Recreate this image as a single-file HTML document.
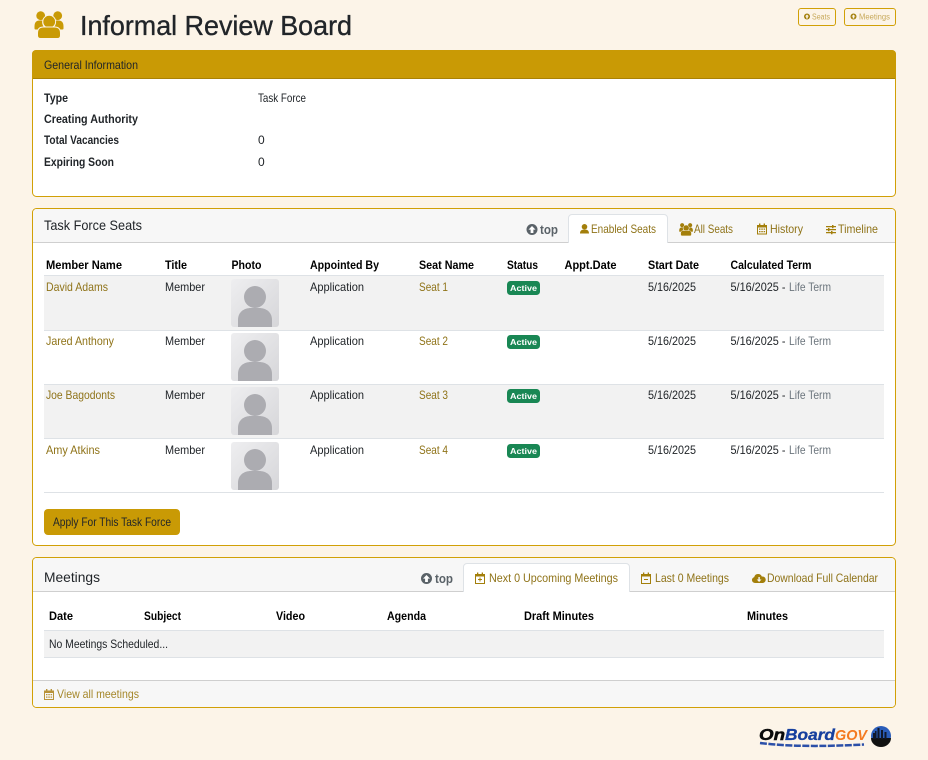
<!DOCTYPE html>
<html lang="en"><head><meta charset="utf-8"><title>Informal Review Board</title>
<style>
html,body{margin:0;padding:0;background:#fcf4e8;width:928px;height:760px;overflow:hidden}
svg{display:block}
text{font-family:"Liberation Sans",sans-serif;font-size:12px;fill:#212529}
.b{font-weight:700;fill:#000}
.l{fill:#8f7318}
.t{fill:#8f7318}
.g{fill:#6c757d}
.k{fill:#212529;font-weight:700}
.i{fill:#a37f0b}
</style></head><body>
<svg xmlns="http://www.w3.org/2000/svg" width="928" height="760" viewBox="0 0 928 760">
<defs>
<linearGradient id="ph" x1="0" y1="0" x2="1" y2="1"><stop offset="0" stop-color="#eeeef0"/><stop offset="1" stop-color="#d6d6d9"/></linearGradient>
<g id="photo"><rect width="48" height="48" rx="3" fill="url(#ph)"/><circle cx="24" cy="18" r="11" fill="#acacb1"/><path d="M7 48v-7c0-8 6-12 13-12h8c7 0 13 4 13 12v7z" fill="#acacb1"/></g>
<g id="users">
<circle cx="6.700" cy="4.700" r="4.400"/><circle cx="23.700" cy="4.700" r="4.400"/>
<path d="M.5 15.500q0-6 5-6h3q-1 3 1 6-3 1-4 3h-4q-1 0-1-1zM29.500 15.500q0-6-5-6h-3q1 3-1 6 3 1 4 3h4q1 0 1-1z"/>
<circle cx="15.200" cy="10.700" r="6.400" stroke="#fcf4e8" stroke-width="1"/>
<path d="M6.500 27.500q-3 0-3-3v-2.500q0-6 6-6h11q6 0 6 6v2.500q0 3-3 3z" stroke="#fcf4e8" stroke-width="1"/>
</g>
<g id="cal"><path d="M1 2.500h2V1h1.400v1.500h3.200V1H9v1.500h2v9.500H1zM2 5v6h8V5z"/><path d="M3 6h1.500v1.300H3zM5.300 6h1.500v1.300H5.300zM7.600 6h1.500v1.300H7.600zM3 8.500h1.500v1.300H3zM5.300 8.500h1.500v1.300H5.300zM7.600 8.500h1.500v1.300H7.600z"/></g>
<g id="up"><circle cx="5.500" cy="5.500" r="5.500" fill="#5a6268"/><path d="M5.500 2 9 5.600H6.900V9H4.100V5.600H2z" fill="#fff"/></g>
<g id="pl"><circle cx="3.500" cy="3.500" r="3" fill="#a37f0b"/><path d="M3.500 1.500 5.500 3.500H4.300v2H2.700v-2H1.500z" fill="#fcf4e8"/></g>
</defs>

<!-- page header -->
<use href="#users" transform="translate(34 11)" fill="#c99a05"/>
<text x="80" y="35" style="font-size:28px;stroke:#212529;stroke-width:.35px" textLength="272" lengthAdjust="spacingAndGlyphs">Informal Review Board</text>
<rect x="798.500" y="8.500" width="37" height="17" rx="2.500" fill="none" stroke="#d1a006"/>
<use href="#pl" x="803.500" y="13"/>
<text x="812" y="19.500" style="font-size:8px;fill:#c8aa5c" textLength="18" lengthAdjust="spacingAndGlyphs">Seats</text>
<rect x="844.500" y="8.500" width="51" height="17" rx="2.500" fill="none" stroke="#d1a006"/>
<use href="#pl" x="850" y="13"/>
<text x="859" y="19.500" style="font-size:8px;fill:#c8aa5c" textLength="31" lengthAdjust="spacingAndGlyphs">Meetings</text>

<!-- General information -->
<rect x="32.500" y="50.500" width="863" height="146" rx="4" fill="#fff" stroke="#d1a006"/>
<path d="M32 54a4 4 0 0 1 4-4h856a4 4 0 0 1 4 4v25H32z" fill="#c99a05"/>
<rect x="33" y="78" width="862" height="1" fill="#a98205"/>
<text x="44" y="69" textLength="94" lengthAdjust="spacingAndGlyphs">General Information</text>
<text class="k" x="44" y="102" textLength="24" lengthAdjust="spacingAndGlyphs">Type</text>
<text class="k" x="44" y="123" textLength="94" lengthAdjust="spacingAndGlyphs">Creating Authority</text>
<text class="k" x="44" y="144" textLength="75" lengthAdjust="spacingAndGlyphs">Total Vacancies</text>
<text class="k" x="44" y="166" textLength="70" lengthAdjust="spacingAndGlyphs">Expiring Soon</text>
<text x="258" y="102" textLength="48" lengthAdjust="spacingAndGlyphs">Task Force</text>
<text x="258" y="144">0</text>
<text x="258" y="166">0</text>

<!-- Seats panel -->
<rect x="32.500" y="208.500" width="863" height="337" rx="4" fill="#fff" stroke="#d1a006"/>
<path d="M33 212.500a3.500 3.500 0 0 1 3.500-3.500h855a3.500 3.500 0 0 1 3.500 3.500V242.500H33z" fill="#f7f7f7"/>
<rect x="33" y="242" width="862" height="1" fill="#cfcfcf"/>
<path d="M568.500 243V218a3.500 3.500 0 0 1 3.500-3.500h92a3.500 3.500 0 0 1 3.500 3.500v25" fill="#fff" stroke="#dee2e6"/>
<rect x="569" y="241" width="98" height="3" fill="#fff"/>
<text x="44" y="230" style="font-size:14px" textLength="98" lengthAdjust="spacingAndGlyphs">Task Force Seats</text>
<use href="#up" x="526.500" y="224"/>
<text x="540" y="234" style="font-size:12.500px;font-weight:700;fill:#5a6268" textLength="18" lengthAdjust="spacingAndGlyphs">top</text>
<path d="M584.500 224a2.800 2.800 0 1 1 0 5.600 2.800 2.800 0 0 1 0-5.600zM580 233.500c0-2.700 1.500-3.800 3-3.800h3c1.500 0 3 1.100 3 3.800z" class="i"/>
<text class="t" x="591" y="233" textLength="65" lengthAdjust="spacingAndGlyphs">Enabled Seats</text>
<use href="#users" transform="translate(679 223) scale(.47)" fill="#a37f0b"/>
<text class="t" x="694" y="233" textLength="39" lengthAdjust="spacingAndGlyphs">All Seats</text>
<use href="#cal" transform="translate(756 222.500)" class="i"/>
<text class="t" x="770" y="233" textLength="33" lengthAdjust="spacingAndGlyphs">History</text>
<path d="M826 226h10v1.200h-10zM826 229h10v1.200h-10zM826 232h10v1.200h-10z" class="i"/><path d="M832 225h1.500v3.200H832zM828 228h1.500v3.200H828zM831 231h1.500v3.200H831z" class="i"/>
<text class="t" x="838" y="233" textLength="40" lengthAdjust="spacingAndGlyphs">Timeline</text>

<text class="b" x="46" y="269" textLength="76" lengthAdjust="spacingAndGlyphs">Member Name</text>
<text class="b" x="165" y="269" textLength="22" lengthAdjust="spacingAndGlyphs">Title</text>
<text class="b" x="231.500" y="269" textLength="30" lengthAdjust="spacingAndGlyphs">Photo</text>
<text class="b" x="310" y="269" textLength="69" lengthAdjust="spacingAndGlyphs">Appointed By</text>
<text class="b" x="419" y="269" textLength="55" lengthAdjust="spacingAndGlyphs">Seat Name</text>
<text class="b" x="507" y="269" textLength="31" lengthAdjust="spacingAndGlyphs">Status</text>
<text class="b" x="564.500" y="269" textLength="52" lengthAdjust="spacingAndGlyphs">Appt.Date</text>
<text class="b" x="648" y="269" textLength="51" lengthAdjust="spacingAndGlyphs">Start Date</text>
<text class="b" x="730.500" y="269" textLength="81" lengthAdjust="spacingAndGlyphs">Calculated Term</text>

<rect x="44" y="275" width="840" height="1" fill="#dee2e6"/>
<rect x="44" y="276" width="840" height="54" fill="#f2f2f2"/>
<rect x="44" y="330" width="840" height="1" fill="#dee2e6"/>
<rect x="44" y="384" width="840" height="1" fill="#dee2e6"/>
<rect x="44" y="385" width="840" height="53" fill="#f2f2f2"/>
<rect x="44" y="438" width="840" height="1" fill="#dee2e6"/>
<rect x="44" y="492" width="840" height="1" fill="#dee2e6"/>

<!-- rows -->
<text class="l" x="46" y="291" textLength="62" lengthAdjust="spacingAndGlyphs">David Adams</text>
<text x="165" y="291" textLength="40" lengthAdjust="spacingAndGlyphs">Member</text>
<use href="#photo" x="231" y="279"/>
<text x="310" y="291" textLength="54" lengthAdjust="spacingAndGlyphs">Application</text>
<text class="l" x="419" y="291" textLength="29" lengthAdjust="spacingAndGlyphs">Seat 1</text>
<rect x="507" y="281" width="33" height="14" rx="3.500" fill="#198754"/>
<text x="510" y="291" style="font-size:8.500px;font-weight:700;fill:#fff" textLength="27" lengthAdjust="spacingAndGlyphs">Active</text>
<text x="648" y="291" textLength="48" lengthAdjust="spacingAndGlyphs">5/16/2025</text>
<text x="730.500" y="291" textLength="55" lengthAdjust="spacingAndGlyphs">5/16/2025 -</text>
<text class="g" x="789" y="291" textLength="42" lengthAdjust="spacingAndGlyphs">Life Term</text>

<text class="l" x="46" y="345" textLength="68" lengthAdjust="spacingAndGlyphs">Jared Anthony</text>
<text x="165" y="345" textLength="40" lengthAdjust="spacingAndGlyphs">Member</text>
<use href="#photo" x="231" y="333"/>
<text x="310" y="345" textLength="54" lengthAdjust="spacingAndGlyphs">Application</text>
<text class="l" x="419" y="345" textLength="29" lengthAdjust="spacingAndGlyphs">Seat 2</text>
<rect x="507" y="335" width="33" height="14" rx="3.500" fill="#198754"/>
<text x="510" y="345" style="font-size:8.500px;font-weight:700;fill:#fff" textLength="27" lengthAdjust="spacingAndGlyphs">Active</text>
<text x="648" y="345" textLength="48" lengthAdjust="spacingAndGlyphs">5/16/2025</text>
<text x="730.500" y="345" textLength="55" lengthAdjust="spacingAndGlyphs">5/16/2025 -</text>
<text class="g" x="789" y="345" textLength="42" lengthAdjust="spacingAndGlyphs">Life Term</text>

<text class="l" x="46" y="399" textLength="69" lengthAdjust="spacingAndGlyphs">Joe Bagodonts</text>
<text x="165" y="399" textLength="40" lengthAdjust="spacingAndGlyphs">Member</text>
<use href="#photo" x="231" y="387"/>
<text x="310" y="399" textLength="54" lengthAdjust="spacingAndGlyphs">Application</text>
<text class="l" x="419" y="399" textLength="29" lengthAdjust="spacingAndGlyphs">Seat 3</text>
<rect x="507" y="389" width="33" height="14" rx="3.500" fill="#198754"/>
<text x="510" y="399" style="font-size:8.500px;font-weight:700;fill:#fff" textLength="27" lengthAdjust="spacingAndGlyphs">Active</text>
<text x="648" y="399" textLength="48" lengthAdjust="spacingAndGlyphs">5/16/2025</text>
<text x="730.500" y="399" textLength="55" lengthAdjust="spacingAndGlyphs">5/16/2025 -</text>
<text class="g" x="789" y="399" textLength="42" lengthAdjust="spacingAndGlyphs">Life Term</text>

<text class="l" x="46" y="454" textLength="54" lengthAdjust="spacingAndGlyphs">Amy Atkins</text>
<text x="165" y="454" textLength="40" lengthAdjust="spacingAndGlyphs">Member</text>
<use href="#photo" x="231" y="442"/>
<text x="310" y="454" textLength="54" lengthAdjust="spacingAndGlyphs">Application</text>
<text class="l" x="419" y="454" textLength="29" lengthAdjust="spacingAndGlyphs">Seat 4</text>
<rect x="507" y="444" width="33" height="14" rx="3.500" fill="#198754"/>
<text x="510" y="454" style="font-size:8.500px;font-weight:700;fill:#fff" textLength="27" lengthAdjust="spacingAndGlyphs">Active</text>
<text x="648" y="454" textLength="48" lengthAdjust="spacingAndGlyphs">5/16/2025</text>
<text x="730.500" y="454" textLength="55" lengthAdjust="spacingAndGlyphs">5/16/2025 -</text>
<text class="g" x="789" y="454" textLength="42" lengthAdjust="spacingAndGlyphs">Life Term</text>

<rect x="44" y="509" width="136" height="26" rx="4" fill="#c99a05"/>
<text x="53" y="526" textLength="118" lengthAdjust="spacingAndGlyphs">Apply For This Task Force</text>

<!-- Meetings -->
<rect x="32.500" y="557.500" width="863" height="150" rx="4" fill="#fff" stroke="#d1a006"/>
<path d="M33 561.500a3.500 3.500 0 0 1 3.500-3.500h855a3.500 3.500 0 0 1 3.500 3.500V591H33z" fill="#f7f7f7"/>
<rect x="33" y="591" width="862" height="1" fill="#cfcfcf"/>
<path d="M463.500 592V567a3.500 3.500 0 0 1 3.500-3.500h159a3.500 3.500 0 0 1 3.500 3.500v25" fill="#fff" stroke="#dee2e6"/>
<rect x="464" y="590" width="165" height="3" fill="#fff"/>
<text x="44" y="582" style="font-size:14px" textLength="56" lengthAdjust="spacingAndGlyphs">Meetings</text>
<use href="#up" x="421" y="573"/>
<text x="435" y="583" style="font-size:12.500px;font-weight:700;fill:#5a6268" textLength="18" lengthAdjust="spacingAndGlyphs">top</text>
<path d="M475 574h2v-1.500h1.300V574h3.400v-1.500H483V574h2v10h-10zM476 576.500v6.500h8v-6.500zM479.500 577.500h1v1.500h1.500v1h-1.500v1.500h-1V580H478v-1h1.500z" class="i"/>
<text class="t" x="489" y="582" textLength="129" lengthAdjust="spacingAndGlyphs">Next 0 Upcoming Meetings</text>
<path d="M641 574h2v-1.500h1.300V574h3.400v-1.500H649V574h2v10h-10zM642 576.500v6.500h8v-6.500zM644 579h4v1h-4z" class="i"/>
<text class="t" x="655" y="582" textLength="74" lengthAdjust="spacingAndGlyphs">Last 0 Meetings</text>
<path d="M755 583a3 3 0 0 1-.8-5.900 4 4 0 0 1 7.600-.6 3.300 3.300 0 0 1 1.200 6.500z" class="i"/><path d="M756.700 579.500h1.700V577h1.400v2.500h1.700l-2.400 2.500z" fill="#f7f7f7"/>
<text class="t" x="767" y="582" textLength="111" lengthAdjust="spacingAndGlyphs">Download Full Calendar</text>

<text class="b" x="49" y="620" textLength="24" lengthAdjust="spacingAndGlyphs">Date</text>
<text class="b" x="144" y="620" textLength="37" lengthAdjust="spacingAndGlyphs">Subject</text>
<text class="b" x="276" y="620" textLength="29" lengthAdjust="spacingAndGlyphs">Video</text>
<text class="b" x="387" y="620" textLength="39" lengthAdjust="spacingAndGlyphs">Agenda</text>
<text class="b" x="524" y="620" textLength="70" lengthAdjust="spacingAndGlyphs">Draft Minutes</text>
<text class="b" x="747" y="620" textLength="41" lengthAdjust="spacingAndGlyphs">Minutes</text>
<rect x="44" y="630" width="840" height="1" fill="#dee2e6"/>
<rect x="44" y="631" width="840" height="26" fill="#f2f2f2"/>
<rect x="44" y="657" width="840" height="1" fill="#dee2e6"/>
<text x="49" y="648" textLength="119" lengthAdjust="spacingAndGlyphs">No Meetings Scheduled...</text>
<path d="M33 681h862v22.500a3.500 3.500 0 0 1-3.500 3.500h-855a3.500 3.500 0 0 1-3.500-3.500z" fill="#f7f7f7"/>
<rect x="33" y="680" width="862" height="1" fill="#cfcfcf"/>
<use href="#cal" transform="translate(43 688)" fill="#b8933a"/>
<text x="57" y="698" style="fill:#a5872a" textLength="82" lengthAdjust="spacingAndGlyphs">View all meetings</text>

<!-- logo -->
<path d="M760 743q40 5 104 1.500" fill="none" stroke="#2b4fa8" stroke-width="2.500" stroke-dasharray="7 1.500"/>
<text x="759" y="740" style="font-size:16px;font-weight:700;font-style:italic;fill:#0a0a0a;stroke:#0a0a0a;stroke-width:.5px" textLength="26" lengthAdjust="spacingAndGlyphs">On</text>
<text x="785" y="740" style="font-size:16px;font-weight:700;font-style:italic;fill:#163f9e;stroke:#163f9e;stroke-width:.3px" textLength="50" lengthAdjust="spacingAndGlyphs">Board</text>
<text x="835" y="740" style="font-size:15px;font-weight:700;font-style:italic;fill:#f47a20" textLength="32" lengthAdjust="spacingAndGlyphs">GOV</text>
<circle cx="881" cy="736" r="10" fill="#2a5cb8"/>
<path d="M871 738h20a10 9 0 0 1-20 0z" fill="#111"/>
<path d="M873 739v-6h2v-2h1.500v8zM877.500 739v-11h2v11zM881 739v-9h2v9zM884.500 739v-7h2v7z" fill="#10182a"/>
</svg>
</body></html>
